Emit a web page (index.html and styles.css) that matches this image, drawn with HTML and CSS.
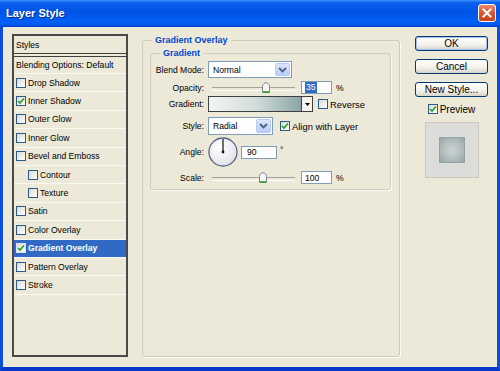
FILE: index.html
```html
<!DOCTYPE html>
<html lang="en">

<head>
  <meta charset="UTF-8" />
  <title>Layer Style</title>
  <link rel="stylesheet" href="styles.css">
</head>

<body>
  <div class="window">
    <div class="titlebar">
      <span class="title">Layer Style</span>
      <span class="close">
        <svg width="10" height="10" viewBox="0 0 10 10"><path d="M1.5 1.5 L8.5 8.5 M8.5 1.5 L1.5 8.5" stroke="#fff" stroke-width="2" stroke-linecap="square" /></svg>
      </span>
    </div>

    <div class="client">
      <div class="styles-list">
        <div class="list-head">Styles</div>
        <div class="list-item blend">Blending Options: Default</div>
        <div class="list-item"><span class="cb"></span>Drop Shadow</div>
        <div class="list-item"><span class="cb checked"><svg width="8" height="8" viewBox="0 0 8 8"><path d="M1 4 L3 6 L7 1.5" fill="none" stroke="#21A121" stroke-width="1.6" /></svg></span>Inner Shadow</div>
        <div class="list-item"><span class="cb"></span>Outer Glow</div>
        <div class="list-item"><span class="cb"></span>Inner Glow</div>
        <div class="list-item"><span class="cb"></span>Bevel and Emboss</div>
        <div class="list-item sub"><span class="cb"></span>Contour</div>
        <div class="list-item sub"><span class="cb"></span>Texture</div>
        <div class="list-item"><span class="cb"></span>Satin</div>
        <div class="list-item"><span class="cb"></span>Color Overlay</div>
        <div class="list-item selected"><span class="cb checked"><svg width="8" height="8" viewBox="0 0 8 8"><path d="M1 4 L3 6 L7 1.5" fill="none" stroke="#21A121" stroke-width="1.6" /></svg></span>Gradient Overlay</div>
        <div class="list-item"><span class="cb"></span>Pattern Overlay</div>
        <div class="list-item"><span class="cb"></span>Stroke</div>
      </div>

      <fieldset class="group outer">
        <legend>Gradient Overlay</legend>
        <fieldset class="group inner">
          <legend>Gradient</legend>

          <div class="row row-blend">
            <span class="lbl">Blend Mode:</span>
            <div class="select select-blend">
              <span class="select-text">Normal</span>
              <span class="drop"><svg width="9" height="6" viewBox="0 0 9 6"><path d="M1 1 L4.5 4.5 L8 1" fill="none" stroke="#4D6185" stroke-width="1.8" /></svg></span>
            </div>
          </div>

          <div class="row row-opacity">
            <span class="lbl">Opacity:</span>
            <div class="slider">
              <span class="thumb" style="left: 50px"><svg width="8" height="11" viewBox="0 0 8 11"><path d="M0.5 10.5 V4.5 Q0.5 2.5 2 1.5 L4 0.5 L6 1.5 Q7.5 2.5 7.5 4.5 V10.5 Z" fill="#F6F6F2" stroke="#7C8698" /><path d="M1 10 H7" stroke="#21A121" stroke-width="1.5" /></svg></span>
            </div>
            <div class="num"><span class="sel">35</span></div>
            <span class="unit">%</span>
          </div>

          <div class="row row-gradient">
            <span class="lbl">Gradient:</span>
            <div class="gradient-pick">
              <span class="gradient-bar"></span>
              <span class="gradient-drop"><svg width="5" height="3" viewBox="0 0 5 3"><path d="M0 0 H5 L2.5 3 Z" fill="#000" /></svg></span>
            </div>
            <span class="cb reverse-cb"></span>
            <span class="cb-text">Reverse</span>
          </div>

          <div class="row row-style">
            <span class="lbl">Style:</span>
            <div class="select select-style">
              <span class="select-text">Radial</span>
              <span class="drop"><svg width="9" height="6" viewBox="0 0 9 6"><path d="M1 1 L4.5 4.5 L8 1" fill="none" stroke="#4D6185" stroke-width="1.8" /></svg></span>
            </div>
            <span class="cb checked align-cb"><svg width="8" height="8" viewBox="0 0 8 8"><path d="M1 4 L3 6 L7 1.5" fill="none" stroke="#21A121" stroke-width="1.6" /></svg></span>
            <span class="cb-text">Align with Layer</span>
          </div>

          <div class="row row-angle">
            <span class="lbl">Angle:</span>
            <svg class="dial" width="30" height="30" viewBox="0 0 30 30">
              <defs>
                <radialGradient id="dialFill" cx="0.4" cy="0.35" r="0.7">
                  <stop offset="0" stop-color="#FFFFFF" />
                  <stop offset="1" stop-color="#E2E2E6" />
                </radialGradient>
              </defs>
              <circle cx="15" cy="15" r="14" fill="url(#dialFill)" stroke="#56668A" stroke-width="1.3" />
              <line x1="15" y1="15" x2="15" y2="2" stroke="#111" stroke-width="1.2" />
              <circle cx="15" cy="15" r="1.4" fill="#111" />
            </svg>
            <div class="num num-angle">90</div>
            <span class="unit deg">°</span>
          </div>

          <div class="row row-scale">
            <span class="lbl">Scale:</span>
            <div class="slider">
              <span class="thumb" style="left: 47px"><svg width="8" height="11" viewBox="0 0 8 11"><path d="M0.5 10.5 V4.5 Q0.5 2.5 2 1.5 L4 0.5 L6 1.5 Q7.5 2.5 7.5 4.5 V10.5 Z" fill="#F6F6F2" stroke="#7C8698" /><path d="M1 10 H7" stroke="#21A121" stroke-width="1.5" /></svg></span>
            </div>
            <div class="num">100</div>
            <span class="unit">%</span>
          </div>
        </fieldset>
      </fieldset>

      <div class="actions">
        <button class="button default">OK</button>
        <button class="button">Cancel</button>
        <button class="button">New Style...</button>
        <div class="preview-check">
          <span class="cb checked"><svg width="8" height="8" viewBox="0 0 8 8"><path d="M1 4 L3 6 L7 1.5" fill="none" stroke="#21A121" stroke-width="1.6" /></svg></span>
          <span>Preview</span>
        </div>
        <div class="preview-box">
          <div class="preview-swatch"></div>
        </div>
      </div>
    </div>
  </div>
</body>

</html>
```

FILE: styles.css
```css
* {
  box-sizing: border-box;
}

body {
  margin: 0;
  background-color: #0A4EDB;
  font-family: 'Liberation Sans', Arial, sans-serif;
  font-size: 8.6px;
  color: #000;
}

.window {
  width: 500px;
  height: 371px;
  display: flex;
  flex-direction: column;
}

/* title bar */

.titlebar {
  height: 27px;
  flex: none;
  display: flex;
  align-items: center;
  justify-content: space-between;
  padding: 0 4px 1px 6px;
  background: linear-gradient(to bottom, #3A93FF 0%, #0A5FEA 10%, #0053E6 45%, #0060F6 80%, #0058EC 92%, #0040C8 100%);
}

.title {
  color: #fff;
  font-weight: bold;
  font-size: 11px;
  text-shadow: 1px 1px 0 #0A2A90;
}

.close {
  width: 18px;
  height: 18px;
  display: flex;
  align-items: center;
  justify-content: center;
  border: 1px solid #fff;
  border-radius: 3px;
  background: linear-gradient(to bottom, #EC8A6A 0%, #DC5A34 45%, #C8401A 100%);
}

/* client area */

.client {
  flex: 1;
  display: flex;
  padding: 7px 9px 10px 9px;
  background-color: #ECE9D8;
  border-left: 3px solid #0A4EDB;
  border-right: 3px solid #0A4EDB;
  border-bottom: 4px solid #0838C8;
}

.styles-list {
  width: 116px;
  flex: none;
  border: 2px solid #4A4A4A;
  display: flex;
  flex-direction: column;
}

.list-head {
  height: 18px;
  padding-left: 2px;
  display: flex;
  align-items: center;
  border-bottom: 1px solid #404040;
  margin-bottom: 2px;
}

.list-item {
  height: 18.4px;
  padding-left: 2px;
  display: flex;
  align-items: center;
  gap: 2px;
  border-bottom: 1px solid #FAF9F4;
}

.list-item.blend {
  height: 18px;
  border-top: 1px solid #404040;
}

.list-item.sub {
  padding-left: 14px;
}

.list-item.selected {
  background-color: #316AC5;
  color: #fff;
  font-weight: bold;
}

.cb {
  width: 10px;
  height: 10px;
  flex: none;
  display: flex;
  align-items: center;
  justify-content: center;
  border: 1px solid #2A5A88;
  background: linear-gradient(135deg, #DAD9D2, #FFFFFF);
}

.selected .cb {
  border-color: #D8E2F4;
}

/* group boxes */

.group {
  margin: 0;
  min-width: 0;
  border: 1px solid #CFCCBC;
  border-radius: 3px;
  box-shadow: 1px 1px 0 #FBFBF8;
}

.group > legend {
  color: #0046D5;
  font-weight: bold;
  font-size: 9px;
  padding: 0 3px;
  line-height: 12px;
}

.outer {
  width: 258px;
  flex: none;
  margin-left: 14px;
  padding: 0 8px 0 7px;
}

.outer > legend {
  margin-left: 2px;
}

.inner {
  margin-top: 1px;
  padding: 2px 0 5px 0;
}

.inner > legend {
  margin-left: 9px;
}

.row {
  display: flex;
  align-items: center;
}

.lbl {
  width: 53px;
  flex: none;
  margin-right: 4px;
  text-align: right;
}

.row-blend {
  height: 17px;
}

.row-opacity {
  height: 13px;
  margin-top: 3px;
}

.row-gradient {
  height: 16px;
  margin-top: 2px;
}

.row-style {
  height: 18px;
  margin-top: 5px;
}

.row-angle {
  height: 30px;
  margin-top: 2px;
}

.row-scale {
  height: 13px;
  margin-top: 4px;
}

/* controls */

.select {
  height: 100%;
  display: flex;
  align-items: center;
  justify-content: space-between;
  border: 1px solid #7F9DB9;
  background-color: #fff;
  padding: 1px;
}

.select-blend {
  width: 84px;
}

.select-style {
  width: 65px;
}

.select-text {
  padding-left: 3px;
}

.drop {
  width: 15px;
  height: 100%;
  display: flex;
  align-items: center;
  justify-content: center;
  border: 1px solid #B6CAF4;
  border-radius: 2px;
  background: linear-gradient(to bottom, #DCE6FD, #B8CDF8);
}

.slider {
  position: relative;
  width: 83px;
  height: 13px;
  margin-left: 4px;
  margin-right: 6px;
}

.slider::before {
  content: '';
  position: absolute;
  left: 0;
  right: 0;
  top: 6px;
  height: 2px;
  border-top: 1px solid #A3A39C;
  border-bottom: 1px solid #FFFFFF;
}

.thumb {
  position: absolute;
  top: 1px;
  display: flex;
}

.num {
  width: 31px;
  height: 13px;
  flex: none;
  display: flex;
  align-items: center;
  padding-left: 3px;
  border: 1px solid #7F9DB9;
  background-color: #fff;
}

.sel {
  background-color: #316AC5;
  color: #fff;
  padding: 0 1px;
  line-height: 11px;
}

.unit {
  margin-left: 4px;
}

.gradient-pick {
  width: 105px;
  height: 16px;
  display: flex;
  border: 1px solid #404040;
}

.gradient-bar {
  flex: 1;
  background: linear-gradient(to right, #F1F4F3 0%, #D3DDDC 50%, #8DA5A7 100%);
}

.gradient-drop {
  width: 11px;
  display: flex;
  align-items: center;
  justify-content: center;
  border-left: 1px solid #404040;
  background-color: #F4F3EE;
}

.reverse-cb {
  margin-left: 5px;
}

.align-cb {
  margin-left: 7px;
}

.cb-text {
  margin-left: 2px;
  font-size: 9.4px;
}

.dial {
  flex: none;
}

.num-angle {
  width: 36px;
  margin-left: 3px;
  padding-left: 5px;
}

.deg {
  margin-left: 3px;
  align-self: flex-start;
  margin-top: 8px;
}

/* right column */

.actions {
  width: 73px;
  flex: none;
  margin-left: 15px;
  padding-top: 2px;
  display: flex;
  flex-direction: column;
  align-items: center;
}

.button {
  width: 100%;
  height: 15px;
  margin: 0 0 8px 0;
  padding: 0;
  font-family: 'Liberation Sans', Arial, sans-serif;
  font-size: 10px;
  color: #000;
  border: 1px solid #003C74;
  border-radius: 3px;
  background: linear-gradient(to bottom, #FFFFFF 0%, #F4F3EE 55%, #D8D4CA 100%);
}

.button.default {
  box-shadow: inset 0 0 0 1px #A6C0EE;
}

.preview-check {
  display: flex;
  align-items: center;
  gap: 2px;
  font-size: 10px;
  height: 10px;
  margin-top: -1px;
}

.preview-box {
  width: 54px;
  height: 56px;
  margin-top: 8px;
  display: flex;
  align-items: center;
  justify-content: center;
  border: 1px solid #CAC8BE;
  background-color: #DCDCDB;
}

.preview-swatch {
  width: 26px;
  height: 26px;
  border: 1px solid #95A2A2;
  background: radial-gradient(circle, #CAD3D2 0%, #B2BEBD 55%, #98A6A6 100%);
}
```
